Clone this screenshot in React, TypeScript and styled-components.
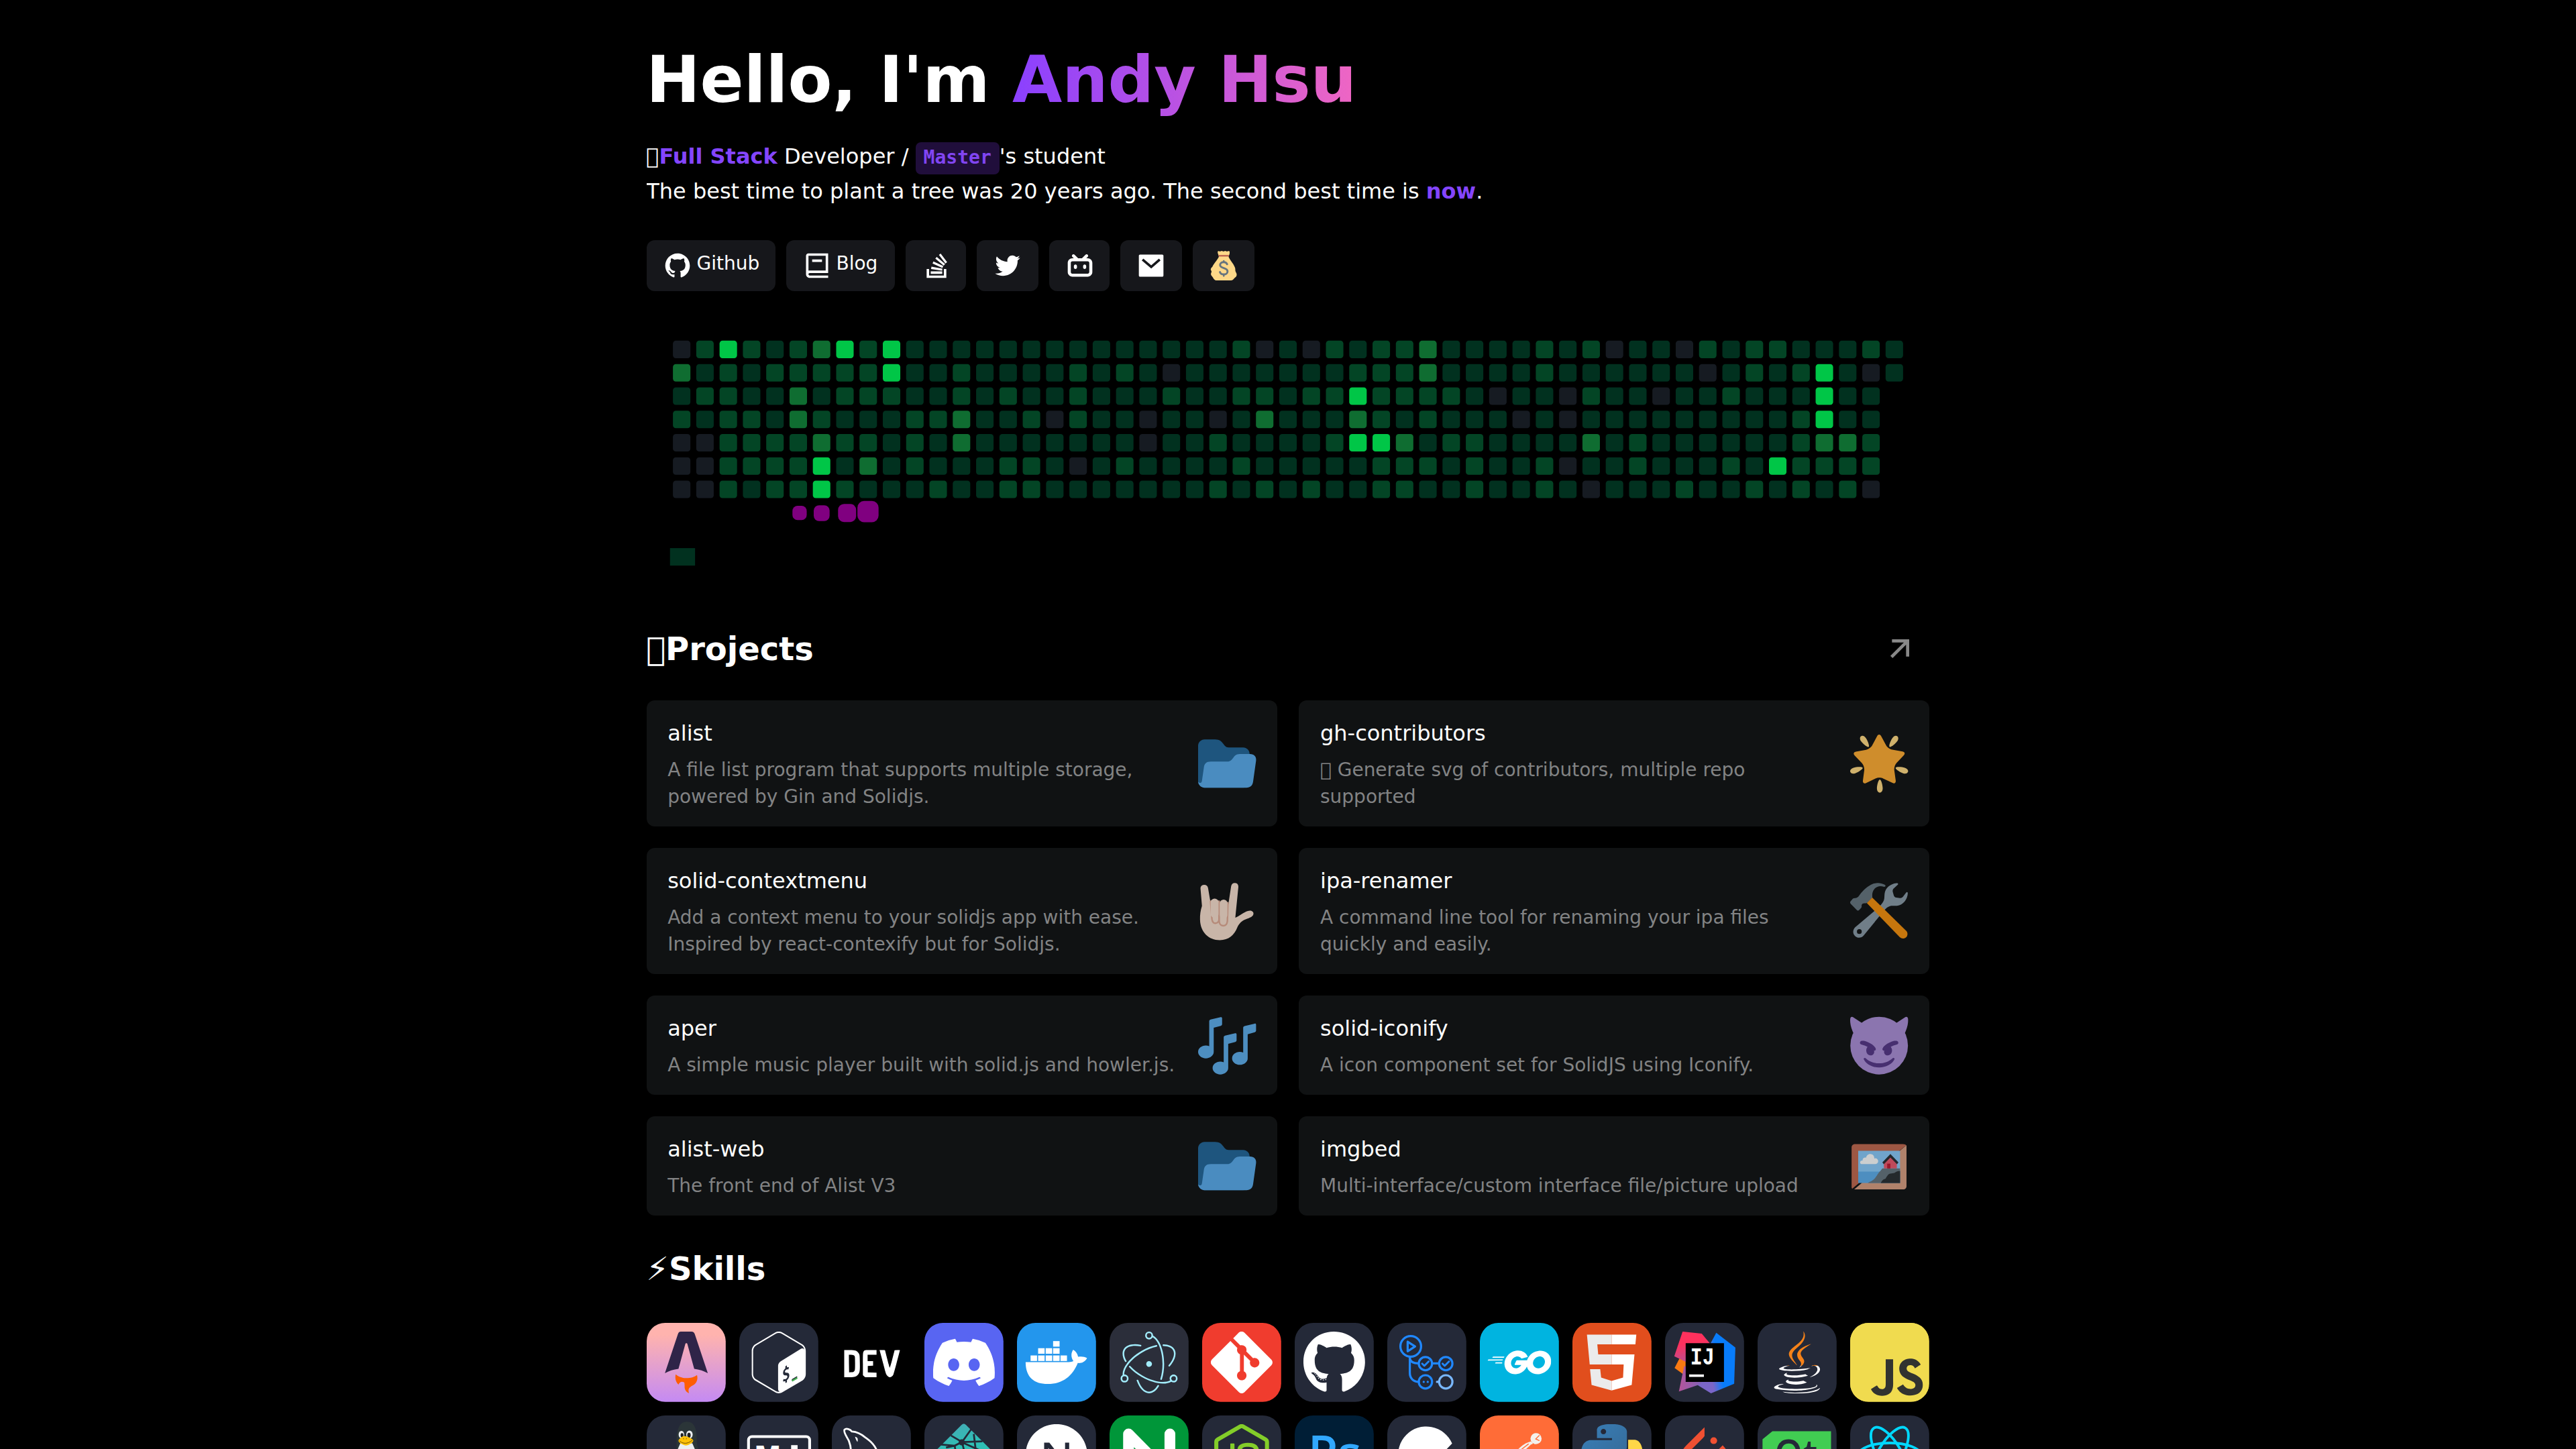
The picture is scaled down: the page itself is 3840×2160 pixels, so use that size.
import React from "react";
import styled, { createGlobalStyle } from "styled-components";
import {
  RiArrowRightUpLine,
  RiBilibiliFill,
  RiBook2Line,
  RiGithubFill,
  RiMailFill,
  RiStackOverflowFill,
  RiTwitterFill,
} from "react-icons/ri";
import {
  SiDevdotto,
  SiDiscord,
  SiElectron,
  SiGit,
  SiGnubash,
  SiGo,
  SiJavascript,
  SiNextdotjs,
  SiNodedotjs,
  SiPytorch,
} from "react-icons/si";
import { FaGithub, FaJava } from "react-icons/fa";

const GlobalStyle = createGlobalStyle`
  body {
    margin: 0;
    background: #000;
    color: #fff;
    font-family: "DejaVu Sans", sans-serif;
    overflow: hidden;
  }
  * { box-sizing: border-box; }
`;

/* ---------- layout ---------- */

const Page = styled.main`
  width: 1912px;
  height: 2160px;
  margin: 0 auto;
  padding-top: 63px;
  overflow: hidden;
  display: flex;
  flex-direction: column;
  & > * { flex-shrink: 0; }
`;

const Title = styled.h1`
  margin: 0 0 32px -0.8px;
  font-size: 96px;
  line-height: 112px;
  font-weight: 700;
`;

const GradientName = styled.span`
  background: linear-gradient(to right, #8a40ff, #ef66c3);
  -webkit-background-clip: text;
  background-clip: text;
  color: transparent;
`;

const Intro = styled.p`
  margin: 0 0 0 -0.8px;
  font-size: 32px;
  line-height: 52px;
`;

const Accent = styled.strong`
  color: #8445ff;
  font-weight: 700;
`;

const Code = styled.code`
  padding: 6px 12px 9px;
  border-radius: 8px;
  background: #200e3b;
  color: #8145f2;
  font: 700 28px "DejaVu Sans Mono", monospace;
`;

const Links = styled.nav`
  display: flex;
  gap: 16px;
  margin-top: 47px;
`;

const LinkButton = styled.a<{ $width: number }>`
  display: flex;
  align-items: center;
  width: ${(p) => p.$width}px;
  height: 76px;
  padding-left: 24px;
  border-radius: 12px;
  background: #16171b;
  font-size: 28px;
  line-height: 36px;
  svg {
    width: 44px;
    height: 44px;
    flex: none;
  }
`;

const LinkLabel = styled.span`
  margin-left: 6.5px;
  padding-bottom: 7px;
`;

const SectionHead = styled.header<{ $top: number; $bottom: number }>`
  display: flex;
  align-items: center;
  justify-content: space-between;
  height: 64px;
  margin: ${(p) => p.$top}px 0 ${(p) => p.$bottom}px;
  padding-right: 16px;
  svg {
    width: 56px;
    height: 56px;
    color: #888;
  }
`;

const SectionTitle = styled.h2`
  margin: 0 0 0 -0.8px;
  font-size: 48px;
  line-height: 64px;
  font-weight: 700;
`;

const Snake = styled.svg`
  display: block;
  width: 1912px;
  height: 417.5px;
`;

const Cards = styled.section`
  display: grid;
  grid-template-columns: 1fr 1fr;
  gap: 32px;
`;

const Card = styled.article`
  display: flex;
  align-items: center;
  justify-content: space-between;
  gap: 32px;
  padding: 25px 32px 24.5px;
  border-radius: 12px;
  background: #101213;
  &:nth-child(odd) {
    padding-left: 31.2px;
  }
`;

const CardText = styled.div`
  flex: 1;
  min-width: 0;
`;

const CardTitle = styled.h3`
  margin: 0 0 10.5px;
  font-size: 32px;
  line-height: 48px;
  font-weight: 400;
`;

const CardDesc = styled.p`
  margin: 0;
  font-size: 28px;
  line-height: 40px;
  color: #828384;
`;

const Emoji = styled.svg`
  flex: none;
  width: 86.4px;
  height: 86.4px;
  opacity: 0.8;
  overflow: visible;
`;

const SkillGrid = styled.section`
  display: grid;
  grid-template-columns: repeat(14, 117.8px);
  justify-content: space-between;
  row-gap: 20.2px;
`;

const SkillTile = styled.svg`
  display: block;
  width: 117.8px;
  height: 117.8px;
`;

/* ---------- contribution graph ---------- */

const LEVELS = ["#161b22", "#01311f", "#034525", "#0f6d31", "#00c647"];

const CONTRIBUTIONS = [
  "024212342411111111111111201" + "02122311112120110212211121",
  "312122222411211112121011111" + "11222311112111111012124101",
  "122113122211212112111211221" + "2242222101102110112111411",
  "212213211122311202110110131" + "1132121110101111111112411",
  "002222322121311111110112111" + "1244312211113121111112332",
  "002222413121112210121111211" + "1112221211201121112142222",
  "002122421112112211111112121" + "2112211211210111211212120",
];

const SNAKE = [
  { x: 84, y: 115.3, s: 9.8, r: 3.5 },
  { x: 98.6, y: 114.9, s: 10.9, r: 3.7 },
  { x: 115.3, y: 114, s: 12.4, r: 4.1 },
  { x: 128.6, y: 112, s: 14.5, r: 4.5 },
];

const ContributionGraph = () => (
  <Snake viewBox="-16 -32 880 192" preserveAspectRatio="xMinYMin meet">
    {CONTRIBUTIONS.map((row, y) =>
      row
        .split("")
        .map((level, x) => (
          <rect
            key={`${x}-${y}`}
            x={x * 16 + 2}
            y={y * 16 + 2}
            width={12}
            height={12}
            rx={2}
            fill={LEVELS[Number(level)]}
          />
        ))
    )}
    {SNAKE.map((p) => (
      <rect key={p.x} x={p.x} y={p.y} width={p.s} height={p.s} rx={p.r} fill="purple" />
    ))}
    <rect x={0} y={144.3} width={17.2} height={12} fill="#01311f" />
  </Snake>
);

/* ---------- emoji drawings (36 unit box) ---------- */

const MoneyBag = () => (
  <svg viewBox="0 0 36 36">
    <path
      fill="#FDD888"
      d="M31.9 20.5c-.8-2.6-2.9-5.600-5-8.500-1.500-2.100-2.600-3.800-2.900-5.200.2-.9.9-1.700 1.200-3 .3-1.400.4-3-.5-3.500-.9-.5-1.600.4-2.500.4-1 0-1.300-.7-2.300-.7-1 0-1.200.7-2 .7s-1.200-.7-2.200-.7c-1 0-1.300.7-2.200.7-.9 0-1.700-.8-2.300-.3-.8.7-.3 2.300.1 3.400.4 1.200.9 2 1 3C11.900 8.600 10.600 10 9 12.200c-2 2.600-3.700 4.700-4.700 7.200-.9.9-2 1.700-2 3.100 0 1.200 1 1.700 1 2.800 0 1-1 1.700-.7 3.600.3 1.700 1.600 2.100 2.300 3.400C5.900 34.100 7 36 9.800 36h17.400c2.600 0 3-1.900 4.300-3 1.500-1.200 2.500-2.200 2.500-4.200 0-1.900-1.300-2.900-1.600-4.300-.2-1.300 0-2.700-.5-4z"
    />
    <rect x="11.6" y="5" width="13" height="1.9" rx="0.9" fill="#BF6952" />
    <g fill="none" stroke="#67757F" strokeLinecap="round">
      <path strokeWidth="2.4" d="M22.300 16.200c-.8-1.800-2.300-2.500-4.200-2.500-2.500 0-4.400 1.300-4.400 3.500 0 4.700 9.100 2.900 9.100 7.700 0 2.400-2 3.800-4.600 3.800-2.200 0-4-1-4.700-2.900" />
      <path strokeWidth="2" d="M18.200 12.300v1M18.200 29.500v1.100" />
    </g>
  </svg>
);

const Folder = () => (
  <Emoji viewBox="0 0 36 36">
    <path fill="#226699" d="M0 29c0 2.209 1.791 4 4 4h24c2.209 0 4-1.791 4-4V12c0-2.209-1.791-4-4-4h-9c-3.562 0-3-5-8.438-5H4C1.791 3 0 4.791 0 7v22z" />
    <path fill="#59ABEC" d="M32.300 12.100h-6.500c-4.300 0-3.800 4.700-7.600 4.700H8c-3 0-4.200 1.300-4.500 4.200L2.400 28.600c-.1.900-.5 1.400-1.200 1.400S0 29.500 0 29c0 2.209 1.791 4 4 4h26c2.400 0 3.900-1.300 4.200-4L36 16.100c.3-2.400-1.300-4-3.700-4z" />
  </Emoji>
);

const GlowingStar = () => (
  <Emoji viewBox="0 0 36 36">
    <path fill="#FFAC33" d="M28.84 17.638c-.987 1.044-1.633 3.067-1.438 4.493l.892 6.441c.197 1.427-.701 2.087-1.996 1.469l-5.851-2.796c-1.295-.62-3.408-.611-4.7.018l-5.826 2.842c-1.291.629-2.193-.026-2.007-1.452l.843-6.449c.186-1.427-.475-3.444-1.47-4.481l-4.494-4.688c-.996-1.037-.655-2.102.755-2.365l6.37-1.188c1.41-.263 3.116-1.518 3.793-2.789L16.762.956c.675-1.271 1.789-1.274 2.473-.009L22.33 6.66c.686 1.265 2.4 2.507 3.814 2.758l6.378 1.141c1.412.252 1.761 1.314.774 2.359l-4.456 4.72z" />
    <path fill="#FFD983" d="M9.783 2.181c1.023 1.413 2.446 4.917 1.717 5.447-.728.531-3.607-1.91-4.63-3.323-1.022-1.413-.935-2.668-.131-3.254.804-.587 2.02-.282 3.044 1.13zm19.348 2.124C28.109 5.718 25.23 8.16 24.5 7.627c-.729-.53.695-4.033 1.719-5.445C27.242.768 28.457.463 29.262 1.051c.803.586.891 1.841-.131 3.254zM16.625 33.291c-.001-1.746.898-5.421 1.801-5.421.897 0 1.798 3.675 1.797 5.42 0 1.747-.804 2.712-1.8 2.71-.994.002-1.798-.962-1.798-2.709zm16.179-9.262c-1.655-.539-4.858-2.533-4.579-3.395.277-.858 4.037-.581 5.69-.041 1.655.54 2.321 1.605 2.013 2.556-.308.95-1.469 1.42-3.124.88zM2.083 20.594c1.655-.54 5.414-.817 5.694.044.276.857-2.928 2.854-4.581 3.392-1.654.54-2.818.07-3.123-.88-.308-.95.354-2.015 2.01-2.556z" />
  </Emoji>
);

const LoveGesture = () => (
  <Emoji viewBox="0 0 36 36">
    <path
      fill="#F7DECE"
      d="M3.600 1.700c-1.300.1-2.200 1-2.100 2.500l.9 10.600c-.9 2.700-1.300 5.600-1.200 8.500C1.400 31 6.500 36 13.500 36c5.500 0 9-3.200 10.800-7.800 1.300-2.900 3-4.200 5.200-5.100 2.700-1 4.900-1.700 4.900-3.600 0-1.500-1.700-2.200-3.500-1.600-2.500.7-5.300 3.200-7.800 4.200L25 3c.1-1.400-.7-2.400-2-2.500-1.300-.1-2.300.7-2.500 2.100l-1.700 11.200-1.100 1L8 14.400 6.200 3.800C6 2.300 4.900 1.600 3.600 1.700z"
    />
    <path
      fill="#F7DECE"
      stroke="#E0AA94"
      strokeWidth="1"
      strokeLinejoin="round"
      d="M7.700 11.500 8.600 23c.2 1.900 1.200 2.700 2.500 2.500 1-.2 1.800-1 1.900-2.200l.1-11.800"
    />
    <path
      fill="#F7DECE"
      stroke="#E0AA94"
      strokeWidth="1"
      strokeLinejoin="round"
      d="M13.100 12.400V24c0 1.900 1 3.100 2.400 3.100s2.500-1.100 2.700-2.900l.3-11.800"
    />
    <rect x="7.800" y="10.200" width="4.900" height="12" rx="2.400" fill="#F7DECE" />
    <rect x="13.500" y="10.800" width="4.700" height="12" rx="2.350" fill="#F7DECE" />
  </Emoji>
);

const Tools = () => (
  <Emoji viewBox="0 0 36 36">
    <path
      fill="#8899A6"
      d="M28.800.600c-3.900.4-7 3-7.400 6.600-.2 1.600 0 2.900-.5 4.200-.5 1.200-1.500 2.400-2.700 3.900L3 28.100c-1.500 1.700-1.500 4 .1 5.400 1.600 1.500 4 1.200 5.300-.4l12.700-15.500c1.200-1.400 2.300-2.300 3.600-2.700 1.200-.4 2.700-.1 4.400-.2 3.800-.4 6.500-4 6.700-7.700 0-.9-.5-1.100-1-.5l-2 2.600c-.5.600-1.100.9-1.900.8l-2.200-.3c-.8-.1-1.400-.7-1.600-1.400l-.6-2.100c-.2-.7-.1-1.300.3-1.900l2.700-2.500c.6-.6.200-1.200-.7-1.100zM5.700 29.200a1.500 1.500 0 1 1 0 3 1.500 1.500 0 0 1 0-3z"
      fillRule="evenodd"
    />
    <path fill="#F4900C" d="M13.600 9.500l-3.300 3.400 20.500 21.300c1.100 1 2.700 1.100 3.800.2 1.200-1.100 1.300-2.900.4-4z" />
    <path
      fill="#66757F"
      d="M21.400 1.600C18.800.200 15.700.200 13 1.600 9.600 3.400 7.400 6 5.600 8.300 4.800 9.400 3.900 10 3 9.900c-.9 0-1.300.3-1.900 1L.2 12c-.3.500-.3.900.1 1.400l3.900 4c.4.400.9.400 1.300 0l1-1c.6-.600.700-1.100.6-1.900 0-1 1-1.500 2-1.400.7.1 1.200-.1 1.700-.6l3-3c-.3-2.600.3-5.500 3.400-6.700 1-.4 2.400-.3 3.900.1.900.1 1.200-.8.3-1.300z"
    />
  </Emoji>
);

const NOTES = [
  { x: 0, y: 0 },
  { x: 9, y: 10 },
  { x: 21.1, y: 4 },
];

const MusicNotes = () => (
  <Emoji viewBox="0 0 36 36">
    {NOTES.map((n) => (
      <path
        key={n.x}
        transform={`translate(${n.x} ${n.y})`}
        fill="#5DADEC"
        d="M14 .550 7.800 2c-.6.200-.9.500-.9 1.100v15.400c-.7-.3-1.400-.4-2.100-.4C2.100 18.100 0 19.900 0 22.100s2.100 4 4.800 4 4.900-1.800 4.900-4V7.100l4.400-1.200c.5-.1.800-.5.800-1V1.200c0-.5-.4-.8-.9-.65z"
      />
    ))}
  </Emoji>
);

const Devil = () => (
  <Emoji viewBox="0 0 36 36">
    <circle cx="18" cy="18.200" r="17.900" fill="#AA8ED6" />
    <path fill="#AA8ED6" d="M2.300 11C.6 7.600-.300 4 .1 1.300.300.100 1.300 0 2.100.7L8 4.600zM33.700 11c1.700-3.400 2.600-7 2.200-9.700-.2-1.200-1.200-1.300-2-.6L28 4.600z" />
    <g fill="#553788">
      <path d="M6.300 15.700c.5-.7 2.600-.7 4.900.4 2.400 1 4.300 2.700 4.700 4 .2 1-.4 1.400-1.100 1.200.5 1.300-.4 3-2.200 3-1.500 0-2.600-1.400-2.600-3.100 0-.8.300-1.600.8-2.200-1.100-.7-2.500-1.200-3.900-1.500-.9-.3-1-1.100-.6-1.800zM29.700 15.700c-.5-.7-2.600-.7-4.900.4-2.400 1-4.300 2.700-4.700 4-.2 1 .4 1.400 1.100 1.200-.5 1.300.4 3 2.200 3 1.500 0 2.600-1.400 2.600-3.100 0-.8-.3-1.600-.8-2.200 1.100-.7 2.500-1.200 3.900-1.500.9-.3 1-1.100.6-1.800z" />
      <path d="M8.400 26.600c0-.7.600-1 1.200-.6 2.300 2.100 5.300 3.200 8.400 3.200s6.100-1.100 8.400-3.200c.6-.4 1.200-.1 1.200.6-1.500 3.200-5.300 5.200-9.600 5.200s-8.100-2-9.600-5.200z" />
    </g>
  </Emoji>
);

const FramedPicture = () => (
  <Emoji viewBox="0 0 36 36">
    <path fill="#D99E82" d="M35 6v24.500c0 1.100-.9 2-2 2H2.500L35 5z" />
    <path fill="#C1694F" d="M34.800 5.200 30 9 5 29l-3.700 3.100c-.3-.3-.4-.7-.4-1.100V6.400c0-1.100.9-2 2-2h30c.9 0 1.600.300 1.900.800z" />
    <path fill="#88C9F9" d="M5 8.500h26v14H5z" />
    <path fill="#5DADEC" d="M5 21.500h26v7H5z" />
    <path fill="#66757F" d="M11 28.500c1.500-1 3.200-1.300 4.600-3.200 1.300-1.600 2-3.300 3.100-4.100l1.300-1.700h11v9z" />
    <path fill="#292F33" d="M19 28.500c1-1.800 1.600-2.300 3-2.700.9-1.500 1.600-2.900 3-3.100l2.500-.4c1.100-.9 2-1.200 3.500-1.300v7.500z" />
    <path fill="#EA596E" d="M20.900 15.200 25 11l4 4.200v4.300h-8z" />
    <path fill="#BE1931" d="M23 16.500h2v3h-2z" />
    <path fill="#292F33" d="M25 10.500l-5 5.200.9 1.200 4.100-4.200 4.100 4.200.9-1.200z" />
    <path fill="#FFF" fillOpacity=".97" d="M15.800 13.100c-.300 0-.5.1-.8.2.1-1.500-.9-2.800-2.500-2.800-1.400 0-2.400 1-2.600 2.300-1.100-.3-2.200.4-2.200 1.600v.2c-1-.1-1.500.400-1.500 1.200 0 .6.500 1 1.200 1h8.100c1.100 0 1.900-.8 1.900-1.800s-.700-1.900-1.600-1.900z" />
  </Emoji>
);

/* ---------- skill logos (256 unit box) ---------- */

const DARK = "#242938";

type TileProps = { bg?: string; children?: React.ReactNode };
const Tile = ({ bg = DARK, children }: TileProps) => (
  <SkillTile viewBox="0 0 256 256">
    <rect width="256" height="256" rx="60" fill={bg} />
    {children}
  </SkillTile>
);

const centered = (size: number) => ({ x: 128 - size / 2, y: 128 - size / 2, size });

const Astro = () => (
  <Tile bg="url(#astroBg)">
    <defs>
      <linearGradient id="astroBg" x1="0" y1="0" x2="0" y2="1">
        <stop offset="0.15" stopColor="#FFB3AE" />
        <stop offset="1" stopColor="#C48AF3" />
      </linearGradient>
    </defs>
    <path fill="#2F2448" d="M111 28h34c6 0 9 3 11 9l42 126c-13-7-28-12-44-14L132 69c-1-4-6-4-7 0l-22 80c-16 2-31 7-44 14l42-126c2-6 4-9 10-9z" />
    <path fill="#FF5D01" d="M94 167c9 8 22 12 35 12s26-3 34-10c3 11 1 22-8 30-8 6-16 8-19 16-1 4 0 9 1 13-10-4-15-13-14-24-1-5 1-9-3-12-7-4-14 0-17 8-9-9-12-20-9-33z" />
  </Tile>
);

const Bash = () => (
  <Tile>
    <SiGnubash {...centered(200)} color="#fff" />
    <path d="M171 188l17-10" stroke="#47B353" strokeWidth="5" />
  </Tile>
);

const Dev = () => (
  <Tile bg="#000">
    <rect x="24" y="64" width="206" height="128" fill="#fff" />
    <SiDevdotto x={-15} y={-12} size={281} color="#000" />
  </Tile>
);

const Discord = () => (
  <Tile bg="#5865F2">
    <SiDiscord {...centered(200)} color="#fff" />
  </Tile>
);

const CONTAINERS = [
  [117, 59],
  [68.500, 82], [93, 82], [117, 82],
  [44, 105.500], [68.500, 105.500], [93, 105.500], [117, 105.500], [141, 105.500],
];

const Docker = () => (
  <Tile bg="#2396ED">
    {CONTAINERS.map(([x, y]) => (
      <rect key={`${x}-${y}`} x={x} y={y} width="21" height="18" fill="#fff" />
    ))}
    <path fill="#fff" d="M28 127h140c6 0 11-1 15-3-8-11-9-25-1-37 9 5 14 13 16 23 10-2 21-1 29 4-6 12-17 17-30 16-17 42-49 68-97 68-47 0-72-24-72-71z" />
  </Tile>
);

const Electron = () => (
  <Tile bg="#2B2E3A">
    <SiElectron {...centered(200)} color="#A2ECFB" />
  </Tile>
);

const Git = () => (
  <Tile bg="#F03C2E">
    <SiGit {...centered(200)} color="#fff" />
  </Tile>
);

const Github = () => (
  <Tile>
    <FaGithub {...centered(206)} color="#fff" />
  </Tile>
);

const GithubActions = () => (
  <Tile>
    <g fill="none" stroke="#2088FF" strokeWidth="7" strokeLinecap="round" strokeLinejoin="round">
      <circle cx="76" cy="76" r="33.500" />
      <path d="M66 61v31l24-15.500z" />
      <path d="M73 112v50c0 18 12 29 29 29M73 112c0 13 10 19 28 19M146 131h20" />
      <circle cx="123.500" cy="132" r="21.500" />
      <circle cx="189.500" cy="132" r="21.500" />
      <circle cx="123.500" cy="191" r="21.500" />
      <path strokeWidth="6" d="M113 132l7 7 14-14M179 132l7 7 14-14" />
      <path d="M118 191h.1M131 191h.1" />
    </g>
    <g fill="none" stroke="#79B8FF" strokeWidth="7" strokeLinecap="round">
      <circle cx="189.500" cy="191" r="21.500" />
      <path d="M161 191h4" />
    </g>
  </Tile>
);

const Go = () => (
  <Tile bg="#00B4E0">
    <SiGo {...centered(206)} color="#fff" />
  </Tile>
);

const Html = () => (
  <Tile bg="#E14E1D">
    <path fill="#EBEBEB" d="M127 38H47l9 97h71v-33H83.500L80.600 69.500H127zM57 150h33l3 27 34 11v31l-65-18z" />
    <path fill="#fff" d="M127 38h80l-3 31.500h-77zM127 102h74l-9 99-65 18v-31l37-11 2-42h-39z" />
  </Tile>
);

const Idea = () => (
  <Tile>
    <defs>
      <linearGradient id="ideaBlue" x1="0" y1="0.600" x2="1" y2="0.300">
        <stop offset="0.300" stopColor="#7B66C8" />
        <stop offset="0.550" stopColor="#087CFA" />
      </linearGradient>
      <linearGradient id="ideaPink" x1="0" y1="0" x2="0.200" y2="1">
        <stop offset="0.450" stopColor="#FE315D" />
        <stop offset="1" stopColor="#C04C8E" />
      </linearGradient>
      <linearGradient id="ideaPurple" x1="0" y1="0" x2="1" y2="0">
        <stop offset="0" stopColor="#B5549A" />
        <stop offset="1" stopColor="#6A68C4" />
      </linearGradient>
    </defs>
    <path fill="url(#ideaBlue)" d="M166 32l62 48-4 117-75 31-44-27 40-130z" />
    <path fill="#F97A12" d="M48 113l-17 33 36 26V118z" />
    <path fill="url(#ideaPink)" d="M57 28l62 7 26 31v60H67l-37-18z" />
    <path fill="url(#ideaPurple)" d="M62 140l-17 82 66-22 40-40z" />
    <path d="M67 66h124v125H67z" />
    <path fill="#fff" d="M78 167h48v8H78z" />
    <text x="82" y="135" fontSize="80" fontWeight="700" fontFamily="Liberation Mono, monospace" textLength="78" lengthAdjust="spacingAndGlyphs" fill="#fff">
      IJ
    </text>
  </Tile>
);

const Java = () => (
  <Tile>
    <defs>
      <linearGradient id="javaFill" x1="0" y1="0" x2="0" y2="512" gradientUnits="userSpaceOnUse">
        <stop offset="0.550" stopColor="#F58219" />
        <stop offset="0.550" stopColor="#fff" />
      </linearGradient>
    </defs>
    <FaJava {...centered(202)} color="url(#javaFill)" fill="url(#javaFill)" />
  </Tile>
);

const Javascript = () => (
  <SkillTile viewBox="0 0 256 256">
    <clipPath id="jsClip">
      <rect width="256" height="256" rx="60" />
    </clipPath>
    <g clipPath="url(#jsClip)">
      <rect width="256" height="256" fill="#F0DB4F" />
      <rect x="60" y="105" width="184" height="140" fill="#323330" />
      <SiJavascript {...centered(256)} color="#F0DB4F" />
    </g>
  </SkillTile>
);

const Linux = () => (
  <Tile>
    <path fill="#2B3538" d="M98 118c-2-36-6-98 32-98 36 0 31 48 33 70 1 14 8 24 12 34v60H80z" />
    <path fill="#ECEFF1" d="M110 88l38 2c4 10 10 20 12 34v70H97v-70c2-14 8-24 13-36z" />
    <ellipse cx="112.500" cy="62" rx="9" ry="12" fill="#ECEFF1" />
    <ellipse cx="138.500" cy="62" rx="10.500" ry="13" fill="#ECEFF1" />
    <ellipse cx="114.500" cy="64" rx="4.500" ry="7" fill="#212121" />
    <ellipse cx="137" cy="64" rx="5.500" ry="8" fill="#212121" />
    <path fill="#FFC107" d="M121 67c8-1 29 9 30 14 1 6-14 16-24 16-9 0-24-9-24-15 0-4 10-14 18-15z" />
    <path fill="none" stroke="#634703" strokeWidth="2" d="M106 82c10 10 26 12 42-2M118 75l3 1M127 76l3-1" />
  </Tile>
);

const Markdown = () => (
  <Tile>
    <rect x="30" y="68.500" width="198" height="119" rx="11" fill="none" stroke="#fff" strokeWidth="9" />
    <text x="49" y="160" fontSize="90" fontWeight="800" fontFamily="Open Sans, sans-serif" textLength="86" lengthAdjust="spacingAndGlyphs" fill="#fff">
      M
    </text>
    <path fill="#fff" d="M168 96h21v32h20l-30.500 34L148 128h20z" />
  </Tile>
);

const Mysql = () => (
  <Tile>
    <g fill="none" stroke="#fff" strokeWidth="6" strokeLinecap="round" strokeLinejoin="round">
      <path d="M61 115c2-12-2-22-6-33-6-12-18-28-14-36 6-6 19-1 24 6 14 1 30 8 43 19 20 14 32 26 40 48" />
    </g>
    <path fill="#fff" d="M75 69c7 1 11 5 8 17-3-4-6-10-8-17z" />
  </Tile>
);

const Netlify = () => (
  <Tile>
    <defs>
      <linearGradient id="netlify" x1="0" y1="0" x2="0.300" y2="1">
        <stop offset="0" stopColor="#4AA6B5" />
        <stop offset="0.450" stopColor="#2EBFB5" />
      </linearGradient>
    </defs>
    <path fill="url(#netlify)" d="M120 31c5-5 10-5 15 0l90 90c5 5 5 10 0 15l-90 90c-5 5-10 5-15 0l-90-90c-5-5-5-10 0-15z" />
    <g stroke={DARK} strokeWidth="6" fill="none">
      <path d="M152 44l-30 42M86 65l36 21 66-2M122 86L98 98 70 104M122 86l8 34M98 98l-44-4M98 98l4 24M124 88l58 26M160 60l6 50" />
    </g>
    <circle cx="121" cy="87" r="10" fill={DARK} />
  </Tile>
);

const Next = () => (
  <Tile>
    <SiNextdotjs {...centered(200)} color="#fff" />
  </Tile>
);

const Nginx = () => (
  <Tile bg="#009639">
    <path fill="none" stroke="#fff" strokeWidth="35" strokeLinecap="round" strokeLinejoin="round" d="M61.500 196V60l134 136V60" />
  </Tile>
);

const Node = () => (
  <Tile>
    <SiNodedotjs {...centered(200)} color="#83CD29" />
  </Tile>
);

const Photoshop = () => (
  <Tile bg="#001E36">
    <text x="43" y="177" fontSize="154" fontWeight="600" fontFamily="Open Sans, sans-serif" textLength="173" lengthAdjust="spacingAndGlyphs" fill="#31A8FF">
      Ps
    </text>
  </Tile>
);

const Planetscale = () => (
  <Tile>
    <path fill="#fff" d="M210 91A91 91 0 1 0 92 211z" />
  </Tile>
);

const Postman = () => (
  <Tile bg="#FF6C37">
    <g fill="#F3F0EC">
      <circle cx="182" cy="75" r="18" />
      <path d="M122 112c12-14 26-24 44-28l6 6-40 40z" />
    </g>
    <g fill="none" stroke="#FF6C37" strokeWidth="3">
      <path d="M193 64l-12 12 12 6M132 112l26-20M142 118l26-24" />
    </g>
  </Tile>
);

const Python = () => (
  <Tile>
    <defs>
      <linearGradient id="pyBlue" x1="0" y1="0" x2="1" y2="1">
        <stop offset="0" stopColor="#387EB8" />
        <stop offset="1" stopColor="#366994" />
      </linearGradient>
    </defs>
    <g transform="translate(28 28) scale(8.333)">
      <path
        fill="url(#pyBlue)"
        d="M14.25.18l.9.2.73.26.59.3.45.32.34.34.25.34.16.33.1.3.04.26.02.2-.01.13V8.5l-.05.63-.13.55-.21.46-.26.38-.3.31-.33.25-.35.19-.35.14-.33.1-.3.07-.26.04-.21.02H8.77l-.69.05-.59.14-.5.22-.41.27-.33.32-.27.35-.2.36-.15.37-.1.35-.07.32-.04.27-.02.21v3.06H3.17l-.21-.03-.28-.07-.32-.12-.35-.18-.36-.26-.36-.36-.35-.46-.32-.59-.28-.73-.21-.88-.14-1.05-.05-1.23.06-1.22.16-1.04.24-.87.32-.71.36-.57.4-.44.42-.33.42-.24.4-.16.36-.1.32-.05.24-.01h.16l.06.01h8.16v-.83H6.18l-.01-2.75-.02-.37.05-.34.11-.31.17-.28.25-.26.31-.23.38-.2.44-.18.51-.15.58-.12.64-.1.71-.06.77-.04.84-.02 1.27.05zm-6.3 1.98l-.23.33-.08.41.08.41.23.34.33.22.41.09.41-.09.33-.22.23-.34.08-.41-.08-.41-.23-.33-.33-.22-.41-.09-.41.09z"
      />
      <path fill="#FFD747" d="M18.300 6.100h2.700c1.700.2 3 2.200 3 5.900h-5.700z" />
    </g>
  </Tile>
);

const Pytorch = () => (
  <Tile>
    <SiPytorch x={28} y={38} size={200} color="#F05032" />
  </Tile>
);

const Qt = () => (
  <Tile>
    <path fill="#41CD52" d="M48 51h190v127l-26 27H16V77z" />
    <text x="54" y="176" fontSize="136" fontWeight="600" fontFamily="Open Sans, sans-serif" textLength="140" lengthAdjust="spacingAndGlyphs" fill={DARK}>
      Qt
    </text>
  </Tile>
);

const ReactLogo = () => (
  <Tile>
    <g fill="none" stroke="#00D8FF" strokeWidth="8.500">
      {[0, 60, 120].map((angle) => (
        <ellipse key={angle} cx="128" cy="128" rx="101" ry="39" transform={`rotate(${angle} 128 128)`} />
      ))}
    </g>
    <circle cx="128" cy="128" r="18" fill="#00D8FF" />
  </Tile>
);

const SKILLS = [
  Astro, Bash, Dev, Discord, Docker, Electron, Git, Github, GithubActions, Go, Html, Idea, Java, Javascript,
  Linux, Markdown, Mysql, Netlify, Next, Nginx, Node, Photoshop, Planetscale, Postman, Python, Pytorch, Qt, ReactLogo,
];

/* ---------- content ---------- */

/* private-use character, drawn as the font's own empty box */
const BOX = "\u{10FFFD}";

const LINKS = [
  { label: "Github", Icon: RiGithubFill, width: 192 },
  { label: "Blog", Icon: RiBook2Line, width: 162 },
  { Icon: RiStackOverflowFill, width: 90 },
  { Icon: RiTwitterFill, width: 92 },
  { Icon: RiBilibiliFill, width: 90 },
  { Icon: RiMailFill, width: 92 },
  { Icon: MoneyBag, width: 92 },
];

const PROJECTS = [
  { name: "alist", desc: "A file list program that supports multiple storage, powered by Gin and Solidjs.", Icon: Folder },
  { name: "gh-contributors", desc: `${BOX} Generate svg of contributors, multiple repo supported`, Icon: GlowingStar },
  { name: "solid-contextmenu", desc: "Add a context menu to your solidjs app with ease. Inspired by react-contexify but for Solidjs.", Icon: LoveGesture },
  { name: "ipa-renamer", desc: "A command line tool for renaming your ipa files quickly and easily.", Icon: Tools },
  { name: "aper", desc: "A simple music player built with solid.js and howler.js.", Icon: MusicNotes },
  { name: "solid-iconify", desc: "A icon component set for SolidJS using Iconify.", Icon: Devil },
  { name: "alist-web", desc: "The front end of Alist V3", Icon: Folder },
  { name: "imgbed", desc: "Multi-interface/custom interface file/picture upload", Icon: FramedPicture },
];

export default function App() {
  return (
    <>
      <GlobalStyle />
      <Page>
        <Title>
          Hello, I'm <GradientName>Andy Hsu</GradientName>
        </Title>
        <Intro>
          {BOX}<Accent>Full Stack</Accent> Developer / <Code>Master</Code>'s student
          <br />
          The best time to plant a tree was 20 years ago. The second best time is <Accent>now</Accent>.
        </Intro>
        <Links>
          {LINKS.map(({ label, Icon, width }, i) => (
            <LinkButton key={i} $width={width}>
              <Icon />
              {label && <LinkLabel>{label}</LinkLabel>}
            </LinkButton>
          ))}
        </Links>
        <ContributionGraph />
        <SectionHead $top={83.5} $bottom={45}>
          <SectionTitle>{BOX}Projects</SectionTitle>
          <RiArrowRightUpLine />
        </SectionHead>
        <Cards>
          {PROJECTS.map(({ name, desc, Icon }) => (
            <Card key={name}>
              <CardText>
                <CardTitle>{name}</CardTitle>
                <CardDesc>{desc}</CardDesc>
              </CardText>
              <Icon />
            </Card>
          ))}
        </Cards>
        <SectionHead $top={47} $bottom={49}>
          <SectionTitle>⚡Skills</SectionTitle>
        </SectionHead>
        <SkillGrid>
          {SKILLS.map((Skill, i) => (
            <Skill key={i} />
          ))}
        </SkillGrid>
      </Page>
    </>
  );
}
